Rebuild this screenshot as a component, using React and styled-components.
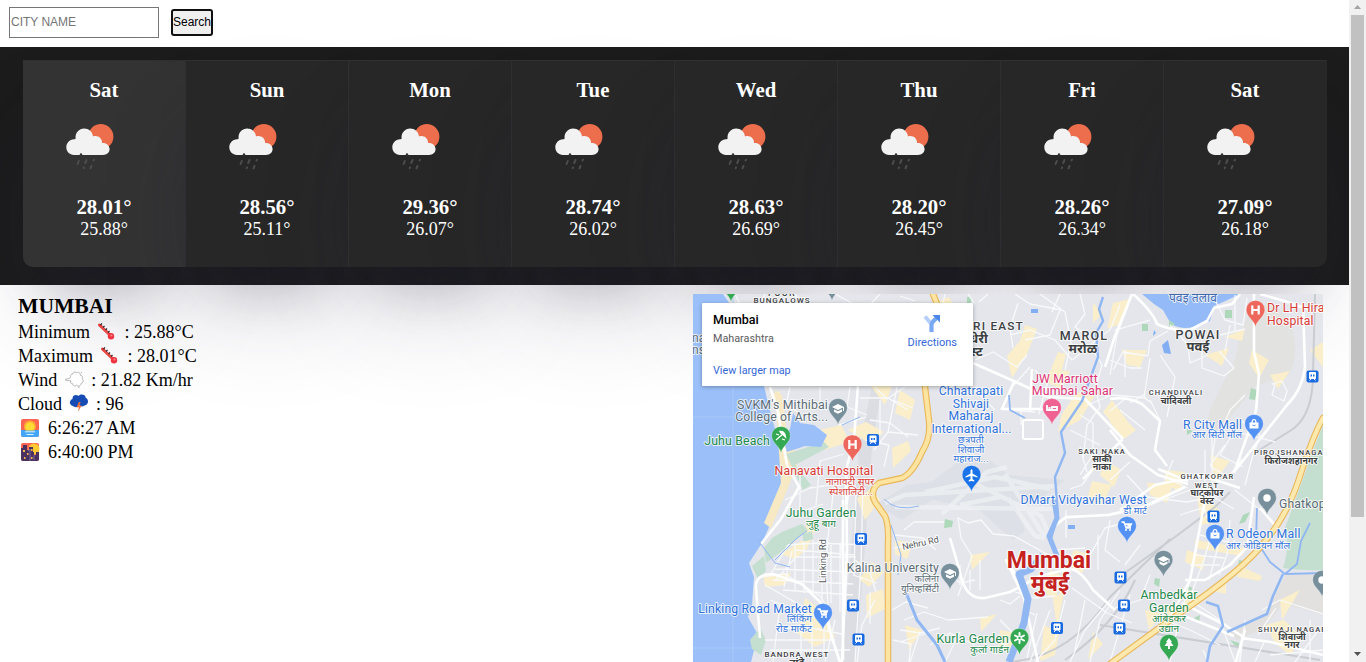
import React from "react";
import styled, { createGlobalStyle } from "styled-components";

const Global = createGlobalStyle`
  * { box-sizing: border-box; }
  html, body { margin: 0; padding: 0; background: #fff; overflow: hidden; }
  body { font-family: "Liberation Serif", "Times New Roman", serif; color: #000; }
`;

const Page = styled.div`display: flex; height: 662px; width: 1366px;`;
const Content = styled.main`width: 1349px; height: 662px; overflow: hidden;`;

const SearchBar = styled.header`
  height: 47px; display: flex; align-items: flex-start; gap: 12px; padding: 7px 9px 0;
`;
const CityInput = styled.input`
  width: 150px; height: 31px; border: 1px solid #767676; border-radius: 0; padding: 0 1px 2px;
  background: transparent; outline: none; font: 12px "Liberation Sans", Arial, sans-serif;
  &::placeholder { color: #757575; opacity: 1; }
`;
const SearchButton = styled.button`
  width: 42px; height: 27px; margin-top: 2px; padding: 0 0 2px; border: 2px solid #101010; border-radius: 3px;
  background: #efefef; color: #000; font: 12px "Liberation Sans", Arial, sans-serif; white-space: nowrap;
  display: flex; align-items: center; justify-content: center;
`;

const ForecastBand = styled.section`height: 238px; padding: 13px 22px 18px 23px; background: #1c1c1c;`;
const ForecastRow = styled.div`display: flex; height: 207px;`;
const DayCard = styled.article`
  width: 163px; display: flex; flex-direction: column; align-items: center; padding: 17px 0 0;
  background: ${(p) => (p.$today ? "#333" : "#272727")};
  border-top: 1px solid #303032; border-right: 1px solid ${(p) => (p.$last ? "#272727" : "#303032")};
  border-bottom-left-radius: ${(p) => (p.$today ? "10px" : 0)};
  border-bottom-right-radius: ${(p) => (p.$last ? "10px" : 0)};
  box-shadow: rgba(50, 50, 93, 0.25) 0 58px 100px -20px, rgba(0, 0, 0, 0.3) 0 34px 60px -30px;
  color: #fff; font-size: 20.8px; line-height: 24px; font-weight: bold;
`;
const RainIcon = styled.svg`width: 50px; height: 50px; margin: 21px 28px 24px 0;`;
const High = styled.div`height: 22px; line-height: 24px; margin-top: -2px;`;
const Low = styled.div`font-size: 18px; line-height: 24px; font-weight: normal;`;

const Lower = styled.section`display: flex; justify-content: space-between; padding: 9px 26px 0 18px;`;
const Details = styled.div`font-size: 18px; color: #000;`;
const City = styled.h1`margin: 0; font-size: 21.6px; height: 26px; line-height: 24px; font-weight: bold;`;
const Line = styled.div`display: flex; align-items: center; height: 24px; white-space: pre;`;
const Glyph = styled.svg`width: 20px; height: 20px; flex: none; margin: 0 ${(p) => p.$right}px 0 ${(p) => p.$left}px;`;

const MapFrame = styled.div`position: relative; width: 630px; height: 368px; overflow: hidden; background: #e4e6eb;`;
const MapSvg = styled.svg`display: block; width: 630px; height: 368px; font-family: Roboto, "Noto Sans", sans-serif;`;
const PlaceCard = styled.div`
  position: absolute; left: 9px; top: 9px; width: 271px; height: 83px; background: #fff;
  box-shadow: 0 1px 4px rgba(0,0,0,.3); border-radius: 1px; padding: 8px 16px 0 11px;
  display: flex; justify-content: space-between; font-family: Roboto, sans-serif;
`;
const PlaceName = styled.div`font-weight: 500; line-height: 17px; font-size: 12.5px;`;
const PlaceRegion = styled.div`font-size: 10.8px; line-height: 18px; color: #5b5b5b; margin-top: 2px;`;
const BigMapLink = styled.div`font-size: 10.8px; line-height: 14px; color: #3367d6; margin-top: 16px;`;
const Directions = styled.div`
  display: flex; flex-direction: column; align-items: center; padding-top: 2px; gap: 3px;
  color: #3367d6; font-size: 11px; line-height: 14px;
`;

const Scrollbar = styled.aside`
  width: 17px; height: 662px; background: #f1f1f1; display: flex; flex-direction: column; align-items: center;
  justify-content: space-between; 
`;
const Thumb = styled.div`width: 13px; height: 502px; background: #c1c1c1; margin-bottom: auto;`;
const Arrow = styled.svg`width: 17px; height: ${(p) => p.$h}px; flex: none;`;

const DAYS = [
  ["Sat", "28.01°", "25.88°"], ["Sun", "28.56°", "25.11°"], ["Mon", "29.36°", "26.07°"], ["Tue", "28.74°", "26.02°"],
  ["Wed", "28.63°", "26.69°"], ["Thu", "28.20°", "26.45°"], ["Fri", "28.26°", "26.34°"], ["Sat", "27.09°", "26.18°"],
];

function Rain() {
  return (
    <RainIcon viewBox="0 0 50 50">
      <circle cx="35.8" cy="13.7" r="12.6" fill="#ec6e4c" />
      <path d="M9 32C4.500 32 1.300 28.500 1.300 24.300S4.500 16.400 9 16.200C10 16.100 10.600 15.900 10.600 15.200C10 10 14 5.500 19.200 5.500C23.800 5.500 27.500 8.700 28 13.400C32.500 11.800 37.300 15 37.100 19.900C41.500 19.600 44.600 22.400 44.600 26.100S41.700 32 38 32Z" fill="#f2f2f2" />
      <circle cx="16" cy="31.500" r="1.200" fill="#333" />
      <g stroke="#4d4d4d" strokeWidth="2" strokeLinecap="round">
        <path d="M13.800 38l-1.200 3M21.500 37l-1.300 3M29 36.700l-.5.8M19 44.500l-.3.6M26.500 43l-1 2.300" />
      </g>
    </RainIcon>
  );
}

const Thermometer = () => (
  <Glyph viewBox="0 0 20 20" $left={7} $right={3}>
    <path d="M2.500 3L14 14" stroke="#e53935" strokeWidth="3" strokeLinecap="round" />
    <path d="M3.500 3l1.500-1.500M6 5.500L7.500 4M8.500 8L10 6.500M11 10.500L12.500 9" stroke="#262a33" strokeWidth="1.200" />
    <path d="M4 4.500l8 8" stroke="#f0716b" strokeWidth=".8" />
    <circle cx="14" cy="14.200" r="3.200" fill="#ef3340" /><circle cx="14.500" cy="13.500" r="1.100" fill="#ff8684" />
  </Glyph>
);
const Wind = () => (
  <Glyph viewBox="0 0 20 20" $left={7} $right={7}>
    <path d="M1 9.500C4 8.500 7 8.700 6.500 6.500C6.300 4.700 8 3.900 9 4C9 2 11.500 1.300 12.500 3C14 1.500 16.800 3 16.200 5.200C18.500 5.300 19 7.500 18 8.700C20 10 19.300 13 17.200 13.200C17.200 16 14 17 12.500 15.200C11 17 8.500 15.500 8.800 13.800C6.500 13.500 6 12.500 7 11C5 10.400 2.500 11 1 9.500ZM14 18l1.500-1M17 3l.8-1" fill="#fff" stroke="#aaa" strokeWidth=".9" />
  </Glyph>
);
const Storm = () => (
  <Glyph viewBox="0 0 20 20" $left={7} $right={7}>
    <path d="M4 12C-.5 11 .3 6 3.500 5C3 1 7.500 0 9.500 2C12-.8 17 .8 16.500 3.500C20 5 20 11 15.500 11.500C13 13.500 11 12 10.500 11C8 14 5.500 13.500 4 12Z" fill="#174bb4" />
    <path d="M9.800 8l-2.200 5.500 2.400-.2-1.200 4.700 3.900-6.500-2.600.2 1.500-3.700Z" fill="#f26d36" />
  </Glyph>
);
const Sunrise = () => (
  <Glyph viewBox="0 0 20 20" $left={2} $right={8}>
    <rect x="1" y="1" width="18" height="18" rx="2" fill="#ff6550" />
    <path d="M1 12h18v5q0 2-2 2H3q-2 0-2-2Z" fill="#42a5f5" />
    <circle cx="10" cy="8.500" r="6" fill="#ffae32" /><circle cx="10" cy="9" r="4.500" fill="#ffdc35" />
    <path d="M1 12.500h18v3H1Z" fill="#42a5f5" /><path d="M5 13.800h10M6.500 16.500h7" stroke="#dff3fc" />
  </Glyph>
);
const Sunset = () => (
  <Glyph viewBox="0 0 20 20" $left={2} $right={8}>
    <rect x="1" y="1" width="18" height="18" rx="2" fill="#ff6550" /><circle cx="14" cy="7" r="5.500" fill="#ffca32" />
    <path d="M1 6h2V3h4v5h2V5h4v5h1v3h2v-3h3v7q0 2-2 2H3q-2 0-2-2Z" fill="#4a315f" />
    <path d="M3 8h2v2H3zM11 7h1.500v2H11zM7 11h1.500v2H7zM4 15h1.500v2H4zM11 15h1.500v2H11z" fill="#f7b84b" />
    <path d="M8 9l2-2v12M14 18v-5" stroke="#7d68a2" fill="none" />
  </Glyph>
);

const MINOR = [
  "M735 294l10 20M765 294l-8 20M795 294l12 16M835 294l30 16M880 294l-15 16M900 296l15 5",
  "M790 387l-4 18 14 8M820 387v22M850 387l-3 20 20 8M905 387l-18 12-12-12M880 400v35M897 387l-9 45-14 18M870 420l20 3 18 14M893 400l20 8M860 398h28l20 12M838 425l28-8M844 454l-24 7M865 440l24 5-5 22M888 432l30 3",
  "M785 500l25-12 20-3M795 514l28-10M800 475v38M820 460l-4 45M833 495l-5 42-2 35 3 50 10 40M843 490v42l-3 27v53M850 485l-5 35M856 490l-2 85M863 485l-2 80-6 97",
  "M770 575l18-30 28-2 50 2M776 580l20-23h60M784 587l8-36M795 591v-48M804 593v-52M813 596v-56M822 601v-55M831 603v-58M840 608v-65M774 569l80 3M773 580l80 4M783 590l70 5M795 550l60 5M760 577l25-3 35 22 8 12",
  "M765 585l35 20 20 15M770 600l45 18M778 630l24-4 40 8M765 640h70M770 650h80M801 625v37M812 622v40M824 612v40M780 605l-7 57M835 620l-10 42",
  "M855 560l15 12 6 20M853 575l24 8M870 592v32M875 600l-13 25-5 37M895 535l28 3 13 12M894 548l16-3M892 610l14-8 22 6M893 640l18 4-2 18",
  "M904 530l10-8h30M904 620l20-8 24 8 40-3M900 630l20 3 20-5M900 642l30-10M910 662l10-30M930 645l20-12 25 12M945 662l15-30M950 575l10 8 15-3M960 565v20M970 570v20M980 560v30M958 596l14-40-11-18-3-20 10 5 13-3 12 14 21 2 45 25",
  "M945 294l-3 14-8 3M968 294l6 9M988 294l-9 8M1015 294l15 10 32 6M1040 294l25 18 6 30-6 28M1010 335l20-5 25 10M1018 303l-8 25 3 20M1060 310l-10 25-25 5M1055 340l17 20 13-10M975 360l18-8 24 15 10-12M1014 385l16-18M1035 370l12 14-8 30M1000 409l35 3M1021 425v-15M975 390l20 20",
  "M1060 294l-8 18M1080 294l5 20-10 13 15 10M1120 305l-10 25-20 15 12 20-5 18M1128 306l-11 29-7 40M1115 330l35-10M1110 360l20 8 12 0",
  "M1087 405l25-10 35 3M1080 415l13 8v25M1095 387l5 20-13 18-4 35M1113 370l10-18 25 4M1125 350v27M1130 403l15-9M1150 400l10 20M1110 411l15-12M1070 430l30 15M1080 447l7 25M1095 451l-15 24M1100 460l-18 25-12 4M1110 480l20-18M1120 410l25 20",
  "M1148 356l2-15 18-10M1150 358l-6 40 8 5M1160 355l15 22-8 40M1170 325l18 20 2 18 18-8M1190 350h12v18l22 8 10-8-15-17M1215 300l10 20 18 5 4-27M1230 325l-5 26M1235 295v36M1220 335l25-6",
  "M1235 430l-15 25 23 12M1240 420l20 15-5 15M1205 450v50M1212 425v60M1216 432l-5 35 18 10M1255 447l-10 38M1230 475l12-16M1225 445l-15 20M1203 485l14 14 17 10M1170 480l18 8M1173 460l-8 20",
  "M1065 518l40-3M1066 510v28M1055 550l30-2M1082 570l23-42 20-5M1098 535v35M1110 520l-5 30 15 12M1127 475l20 22 40 5 25-5M1105 515l45-10 40-15M1180 515l25-8M1200 490l7 28M1200 535l32 8M1195 555l30 3M1190 565h30M1214 525l-10 35-15 40M1222 532l-13 48",
  "M1190 580l-10 40M1230 520l-3 35-8 20M1235 540l-8 10M1235 490l25 20M1190 600l30 20 15 42M1165 620l25 10 30 15M1178 625l-8 37M1203 650l5 12M1245 620l-5 42M1245 628l-6 34",
  "M1015 592l20 6 20-2M1000 600l10 4 10-8M1025 610l10 5M1000 620l15 15M1000 650l15-15M1037 613l-10 45M1065 600l-10 40-20 22M1072 588l35 25 25 10M1050 610l-20 52M1110 600l-25 30-15 32M1085 600l-10 50M1120 590l-20 30-10 42M1130 595l-20 67M1150 575l-10 25-25 8M1140 545l-15 20",
  "M1245 395l-15 15-10 24M1230 430l45 12M1275 385l-3 10 12 6 3-10-5-10-10 3zM1262 610l18-10 43 14M1258 635l18-27M1265 640l-10 22M1270 655l53-5M1310 620v42M1320 628l-25 34",
];
const MAJOR = [
  "M770 387l8 25 4 25 5 28 12 22-18 32-20 25M973 363l43 19 32 15 37 2 38 40M1123 439l-40 40M1014 382l-12 27M1032 369l-2 42M1002 409h43",
  "M756 588Q755 574 773 574L802 584 822 604 832 638 840 662M843 500v160M756 588l4 50M858 385l-4 55-8 30 1 80-5 112",
  "M1132 294l-17 42-10 31M1133 294Q1153 312 1157 324Q1172 331 1190 330L1207 321 1214 308 1232 304 1240 294M1260 294l31 9 13 5 19 4M1303 303l2 65Q1302 390 1287 405L1234 472M1254 294v58L1259 374 1256 411 1234 473M1110 399Q1127 396 1142 404L1160 421 1155 450 1167 466M1110 430l20 25 28 20 30 9",
  "M950 538L960 572Q965 600 985 598L1010 592 1040 576 1065 570Q1078 565 1093 590L1115 610M1016 575l-10-15 18 38 14 64M1056 525l10-8 43-2 34-8 42-20M1120 510l35-25 45-10 40 13M1260 508l20 23M1205 500l-15 80-24 45M1185 580l20 0 25-15 17-18 7-50",
  "M1182 603L1225 625 1245 638M1245 630l-10 35M1241 638l30 4 52 13M1234 636l-50-20M1188 481l-30-12",
];
const YELLOW = "M770 395l10-4v17zM820 430l21-5 9 17-26 8zM848 430l18-8 18 10-13 12zM857 498l15-10 8 12-15 20zM807 520l10 4-10 25-12 10-14-5 22-14zM763 575l28-2-6 12-20 2zM805 598l20 15 10 24-20 10-18-14zM872 562l12 10-15 15-10-8zM866 595l17-6 2 20-18 9zM895 540l18 3-6 16-12-5zM900 390l15 10-5 20-15-7zM892 448l16-7 3 10-18 17zM870 385l23-2-8 22zM937 302l12-5 9 16-15-5zM1025 325l12 4-10 25-15 24-5-22 13-15zM1058 352l8 2-5 20-10-5zM1050 370l20 1-9 18-15-7zM1077 392l18 3-15 25-22 12 4-18zM1093 303l10 10-10 10zM1113 303l17-4-10 25-13 5zM1122 350l25 0-7 17-13-2zM1112 400l15 20-8 12-16-20zM1124 418l12 12-12 9-15-18zM1105 460l16 10-7 17-14-12zM1147 483l26 0-6 20-17-8zM1092 481l20 4-10 20-15-5zM1197 495l20 12 4 14-20 4zM1187 550l18 6-2 14-18-8zM1182 588l18 5-15 15zM1195 540l50 8-3 8-47-8zM1252 350l17 10-10 18-10-15zM1225 337l20-8-3 12zM1205 355l24-7-7 18zM1270 375l20-4-12 18zM1310 350l13-8v25zM1280 600l20-10-18 30zM1266 625l18-5 18 18-12 17-15-12zM1208 590l18-8 0 12zM1167 605l15 4-15 20zM1145 610l19 4-15 16zM1240 566l22 10-2 5-23-4zM1050 570l10 5-4 25-14-8zM1053 600l12-12-8 40zM1074 550l18 5-10 18-15-8zM1044 625l15 8-4 22-15 6zM970 555l20-3-18 18zM980 618l17-4-16 18zM905 625l17 5-13 20zM1000 630l20 4-7 20-15-6zM1093 632l10 12-15 15zM1165 470l20 2-5 20-15-8zM1210 455l20 6-15 20z";

const LABELS = [
  ["FOUR", 782, 295.500, 9, "dark", "middle", 1.3], ["BUNGALOWS", 782, 303, 8, "dark", "middle", 1],
  ["SVKM's Mithibai", 828, 408.500, 12.300, "grey", "end"], ["College of Arts...", 828, 421, 12.200, "grey", "end"],
  ["Juhu Beach", 770, 444.500, 12.300, "green", "end"], ["Nanavati Hospital", 824, 475, 12.200, "red", "middle"],
  ["नानावटी सुपर", 850, 485, 9.800, "red", "middle"], ["स्पेशालिटी...", 851, 495, 9.800, "red", "middle"],
  ["Juhu Garden", 821, 516.500, 12.200, "green", "middle"], ["जुहू बाग", 821, 527, 10, "green", "middle"],
  ["Kalina University", 939, 572, 12.200, "grey", "end"], ["कलिना", 939, 581.500, 9.500, "grey", "end"], ["युनिव्हर्सिटी", 939, 591.500, 9.500, "grey", "end"],
  ["Linking Road Market", 812, 612.500, 12.200, "blue", "end"], ["लिंकिंग", 812, 622, 9.800, "blue", "end"], ["रोड मार्केट", 812, 632, 9.800, "blue", "end"],
  ["BANDRA WEST", 797, 656.500, 8, "dark", "middle", 0.9], ["वांद्रे", 797, 666, 10, "dark", "middle"],
  ["ANDHERI EAST", 1024, 330, 11.800, "dark", "end", 1.2], ["अंधेरी", 988, 342.500, 13, "dark", "end"], ["ईस्ट", 983, 356, 13, "dark", "end"],
  ["MAROL", 1084, 340, 12.500, "dark", "middle", 1.2], ["मरोळ", 1083, 353, 13, "dark", "middle"],
  ["POWAI", 1198, 338.500, 12.500, "dark", "middle", 1.2], ["पवई", 1198, 351, 13, "dark", "middle"],
  ["पवई तलाव", 1193, 302, 12, "lake", "middle"],
  ["Dr LH Hiranandani", 1267, 312, 12.300, "red", "start"], ["Hospital", 1267, 325, 12.200, "red", "start"],
  ["JW Marriott", 1065, 382.500, 12.200, "pink", "middle"], ["Mumbai Sahar", 1072.500, 395, 12.300, "pink", "middle"],
  ["CHANDIVALI", 1176, 395, 7.500, "dark", "middle", 1.1], ["चांदिवली", 1176, 403.500, 8.800, "dark", "middle"],
  ["Chhatrapati", 971, 395, 12.200, "blue", "middle"], ["Shivaji", 971, 407.500, 12.200, "blue", "middle"], ["Maharaj", 971, 420, 12.200, "blue", "middle"], ["International...", 971.500, 432.500, 12.200, "blue", "middle"],
  ["छत्रपती", 971, 443, 9.500, "blue", "middle"], ["शिवाजी", 971, 452.500, 9.500, "blue", "middle"], ["महाराज...", 971, 462, 9.500, "blue", "middle"],
  ["R City Mall", 1242, 428.500, 12.200, "blue", "end"], ["आर सिटी मॉल", 1242, 438, 9.500, "blue", "end"],
  ["SAKI NAKA", 1102, 453.500, 7.500, "dark", "middle", 1], ["साकी", 1102, 462, 9, "dark", "middle"], ["नाका", 1102, 470, 9, "dark", "middle"],
  ["PIROJSHANAGAR", 1254, 455, 7.500, "dark", "start", 1.1], ["फिरोजशहानगर", 1291, 463.500, 8.700, "dark", "middle"],
  ["GHATKOPAR", 1207.500, 479, 7.500, "dark", "middle", 1.2], ["WEST", 1207, 487.500, 7.500, "dark", "middle", 1.1], ["घाटकोपर", 1207, 496, 8.800, "dark", "middle"], ["वेस्ट", 1207, 504, 8.800, "dark", "middle"],
  ["Ghatkopar", 1279, 507.500, 12.200, "grey", "start"], ["DMart Vidyavihar West", 1147, 503.500, 12.200, "blue", "end"], ["डी मार्ट", 1147, 513.500, 9.500, "blue", "end"],
  ["R Odeon Mall", 1226, 538, 12.300, "blue", "start"], ["आर ओडियन मॉल", 1226, 548.500, 9.800, "blue", "start"],
  ["Ambedkar", 1169, 599, 12.200, "green", "middle"], ["Garden", 1169, 611.500, 12.200, "green", "middle"], ["आंबेडकर", 1169, 621.500, 10, "green", "middle"], ["उद्यान", 1169, 631.500, 10, "green", "middle"],
  ["Kurla Garden", 1009, 642.500, 12.300, "green", "end"], ["कुर्ला गार्डन", 1009, 652.500, 9.800, "green", "end"],
  ["SHIVAJI NAGAR", 1258, 631.500, 7.500, "dark", "start", 1.1], ["शिवाजी", 1292, 640, 9, "dark", "middle"], ["नगर", 1292, 648, 9, "dark", "middle"],
  ["na", 692, 342, 12, "grey", "start"], ["ns", 692, 354, 12, "grey", "start"],
];
const INK = { dark: "#3c4043", grey: "#5b6b75", green: "#22884b", red: "#d83b35", blue: "#2f72db", pink: "#dc3275", lake: "#4268ad" };
const PINS = [
  [838, 408, "#78909c", "cap"], [781, 436, "#34a853", "beach"], [852.500, 444.500, "#ee675c", "H"], [1255.500, 310, "#ee675c", "H"],
  [1052, 408, "#f06292", "bed"], [1254, 424, "#5491f5", "bag"], [971.500, 475, "#1a73e8", "plane"], [1267, 498, "#78909c", "dot"],
  [1127, 526, "#5491f5", "cart"], [1215, 534, "#5491f5", "bag"], [950, 573, "#78909c", "cap"], [823, 613, "#5491f5", "cart"],
  [1163.500, 560, "#78909c", "cap"], [1019.500, 638, "#34a853", "flower"], [1169, 644, "#34a853", "tree"], [1322, 580, "#78909c", "dot"],
  [731, 285, "#34a853", ""], [832, 284, "#78909c", ""],
];
const MARK = {
  H: <path d="M-3.200-4.500v9M3.200-4.500v9M-3 0h6" stroke="#fff" strokeWidth="2.200" />,
  cap: <g fill="#fff"><path d="M-6-1l6-3 6 3-6 3z" /><path d="M-4 1.200l4 2 4-2v2.500l-4 2-4-2zM5-1h1v4H5z" /></g>,
  beach: <g fill="none" stroke="#fff" strokeWidth="1.300"><path d="M-5 4L3-3" /><path d="M-1-4.500Q4-5 4.500 1L2.500-1 0-3z" fill="#fff" /><path d="M-5-2l3 1M1 3l3 1" /></g>,
  bed: <path d="M-5-3v6M-5 2h10M5 3v-4h-5v3M-3.500 0h2" stroke="#fff" strokeWidth="1.800" fill="none" />,
  bag: <><path d="M-4.500-1.500h9v6h-9z" fill="#fff" /><path d="M-2-1q0-3.500 2-3.500t2 3.500" stroke="#fff" strokeWidth="1.200" fill="none" /><path d="M-1.500 1q1.500 1.800 3 0" stroke="#5491f5" fill="none" /></>,
  cart: <><path d="M-5.500-4h2.500l2 6h5M-2.500-2h7l-1.500 3h-4.500" stroke="#fff" strokeWidth="1.300" fill="#fff" /><circle cx="-1" cy="4" r="1" fill="#fff" /><circle cx="3" cy="4" r="1" fill="#fff" /></>,
  plane: <path d="M0-6l1 1.200v3.200l5 3v1.200l-5-1.500v3l1.800 1.500v1L0 6l-2.800.6v-1L-1 4.100v-3l-5 1.500V1.400l5-3v-3.200z" fill="#fff" />,
  dot: <circle r="3.700" fill="#fff" />,
  flower: <><path d="M0-5V5M-4.500-2.500l9 5M-4.500 2.500l9-5" stroke="#fff" strokeWidth="2" strokeLinecap="round" /><circle r="1.200" fill="#34a853" /></>,
  tree: <path d="M0-6l3 4H1.800L4.500 2H1v3h-2V2h-3.500l2.700-4H-3z" fill="#fff" />,
};
const STATIONS = [[873, 440], [861, 539], [853, 605.500], [858.500, 639.500], [1312.500, 376.500], [1213.500, 516.500], [1120.500, 577.500], [1124, 605.500], [1119.500, 628.500], [1057, 628]];
const WESTERN_EXPRESS = "M933 294l4 10-12 83 4 34q2 17-7 31-9 21-20 26l-23 5q-10 8-4 19l10 14q4 9 3 28v120";
const EASTERN_EXPRESS = "M1323 418q-10 18-23 58-12 38-34 64-21 29-89 75l-70 51";

function CityMap() {
  return (
    <MapSvg viewBox="693 294 630 368">
      <path d="M693 294h30l14 20 10 40 17 32 4 17 8 30 5 26 1 20-5 20-7 26-8 18-13 20 5 14-2 28-4 12 10 18-7 27h-62z" fill="#9bc0f9" />
      <path d="M733 294v368M693 417h82M693 648h60" stroke="#a9c9fa" />
      <path d="M1235 360q5-30 15-48 20-18 40 10 12 34-3 55l-30 8q-20 25-42 48-15 4-2-30z" fill="#e1dfda" opacity=".6" />
      <path d="M1230 632l38-17 8-22 10-18 37-2v42l-40-12-18 25-28 12z" fill="#e2ded9" opacity=".65" />
      <path d="M1323 424v146q-20 1-40-2 7-20 2-40l11-30z" fill="#c4dfd0" />
      <g fill="#d5d9df">
        <path d="M876 505l31-20 24-3 38-28 22 7 17 14 57 5-20 16-30 7 10 28-12 9-35-31-46-9-30 20z" opacity=".45" />
        <path d="M872 387h10l-10 60-7 100-9 115h-15l13-145 5-70z" opacity=".65" />
      </g>
      <g stroke="#eef0f2" strokeWidth="4.500" opacity=".8" fill="none">
        <path d="M885 503l20-8 150-9M895 507l160 2M942 514l45-42 20-5M976 484l65 32 6 14-4 8-8-2-27-38M1005 474l38 60M925 492l70-15 55 12M960 505l40-8" />
      </g>
      <path d={YELLOW} fill="#faefca" />
      <path d="M775 390l7 5 5 40 12 25-12 30-16 38-7-5 17-40-2-30z" fill="#f6e9c4" />
      <path d="M786 454l38-12 5 5-34 18 16 20-8 5zM782 532l20-8 6 6-22 18-20 15-2-15 8-10zM752 566l12-10 2 15-8 8zM803 534l9-3 1 8-10 3zM750 640l10-12 6 12-5 15-9-6z" fill="#c4dfcf" />
      <path d="M793 413l7 10 14 2 13 10-6 12-16-1-18 6-4-13 7-10z" fill="#9bc0f9" />
      <path d="M1142 294l12 10 9 6 8 14q11 6 22 3l17-6 4-15q12-5 26-12z" fill="#94bbf7" />
      <g fill="#add8b9"><path d="M1142 324h6v7h-6zM1225 310h7v8h-7zM1251 388l6 2-2 10-6-1zM1243 515l7-3-5 10-6 2zM1239 560l8 2-9 7zM1155 578l5 1-1 8-5-3zM1230 640l9 3v7zM945 519l8 2-1 6-8 1zM967 297h4v8h-4zM1169 320l6 4-6 4zM1187 429l6 2-6 4zM1187 585l7 4-7 2zM1194 618l6-3-1 8z" /></g>
      <path d="M1162 345l6-5 3 14-7-1zM1154 330l2 3-3 3zM1031 309h7v4h-7zM1068 525h7v4h-7z" fill="#82aef4" />
      <g fill="none" stroke="#c9cdd2" strokeWidth="2"><path d="M1315 294l-2 80q0 40-20 55l-40 25M1115 580l60-43 40-30 15-15M1065 660q50-35 70-80M1010 662q60-5 100-65l60-58M1100 625l220 35" /></g>
      <path d={MINOR.join(" ")} fill="none" stroke="#f8f9fa" strokeWidth="1.300" strokeLinejoin="round" />
      <path d={MAJOR.join(" ")} fill="none" stroke="#fff" strokeWidth="2.600" strokeLinejoin="round" />
      <g fill="none" stroke="#91b7f3" strokeLinejoin="round">
        <path d="M1103 297l-4 12 4 12-7 12 2 24-16 44-21 31 4 21-10 24 3 38-8 27 8 17" strokeWidth="2.400" />
        <path d="M1054 500l3 18-8 18 8 20" strokeWidth="5" />
        <path d="M1043 555l-12 14-12 5 9 25-4 24-15 39" strokeWidth="7" />
        <path d="M905 590l12 30 20 25 8 17" strokeWidth="3" />
        <path d="M1009 395l1 15 15 8M1257 508l-1 32 14 22 15 12 38-1M1310 523l-9 18-4 23-12 10" strokeWidth="1.800" />
        <path d="M1283 574l-10 22-6 18-40 18M1206 602l12 4 5 20-13 20-3 16" strokeWidth="2.600" />
        <path d="M757 539l18 24 15 4M775 560l22-22 10-7M884 499q12 13 35 7M891 525l10 30-3 20M842 425l18-8" strokeWidth="1" />
      </g>
      <g fill="none" strokeLinejoin="round" strokeLinecap="round">
        <path d={WESTERN_EXPRESS} stroke="#e9b75a" strokeWidth="6.500" />
        <path d={WESTERN_EXPRESS} stroke="#fde4a0" strokeWidth="4.300" />
        <path d={EASTERN_EXPRESS} stroke="#e9b75a" strokeWidth="6.500" />
        <path d={EASTERN_EXPRESS} stroke="#fde8ad" strokeWidth="4.300" />
      </g>
      <rect x="1023" y="420" width="20" height="19" rx="2" fill="none" stroke="#fff" strokeWidth="2" />
      {STATIONS.map(([x, y]) => (
        <g key={x + "-" + y} transform={`translate(${x} ${y})`}>
          <rect x="-6" y="-6" width="12" height="12" rx="2" fill="#1a6ae0" />
          <path d="M-3-4h6v6h-6zM-3 4l2-2M3 4l-2-2" fill="#fff" stroke="#fff" />
          <path d="M-2-2h1.500v2H-2zM.5-2H2v2H.5z" fill="#1a6ae0" />
        </g>
      ))}
      {PINS.map(([x, y, color, mark]) => (
        <g key={x} transform={`translate(${x} ${y})`}>
          <path d="M0 17C-1 10-9.300 7-9.300-.3a9.300 9.300 0 1 1 18.600 0C9.300 7 1 10 0 17z" fill={color} stroke="#fff" strokeOpacity=".45" strokeWidth=".6" />
          {MARK[mark]}
        </g>
      ))}
      {LABELS.map(([text, x, y, size, tone, anchor, spacing]) => (
        <text key={text + x + y} x={x} y={y} fontSize={size} fill={INK[tone]} textAnchor={anchor} letterSpacing={spacing || 0.15}
          fontWeight={tone === "dark" ? (/[A-Z]/.test(text) ? 500 : 700) : 400} stroke="#fff" strokeOpacity=".8" strokeWidth="1.8" strokeLinejoin="round" paintOrder="stroke">{text}</text>
      ))}
      <g fontSize="9.500" fill="#55595d" stroke="#fff" strokeWidth="2" paintOrder="stroke">
        <text transform="translate(826 583) rotate(-90)">Linking Rd</text>
        <text transform="translate(903 550) rotate(-12)" fontSize="9">Nehru Rd</text>
      </g>
      <g fontWeight="700" fill="#c5221f" stroke="#fff" strokeWidth="2.500" strokeOpacity=".8" strokeLinejoin="round" paintOrder="stroke" textAnchor="middle">
        <text x="1049" y="567.500" fontSize="23">Mumbai</text><text x="1050" y="590.500" fontSize="21.500">मुंबई</text>
      </g>
    </MapSvg>
  );
}

export default function App() {
  return (
    <Page>
      <Global />
      <Content>
        <SearchBar><CityInput placeholder="CITY NAME" /><SearchButton>Search</SearchButton></SearchBar>
        <ForecastBand>
          <ForecastRow>
            {DAYS.map(([day, high, low], i) => (
              <DayCard key={i} $today={i === 0} $last={i === 7}><div>{day}</div><Rain /><High>{high}</High><Low>{low}</Low></DayCard>
            ))}
          </ForecastRow>
        </ForecastBand>
        <Lower>
          <Details>
            <City>MUMBAI</City>
            <Line>Minimum<Thermometer /> : 25.88°C</Line>
            <Line>Maximum<Thermometer /> : 28.01°C</Line>
            <Line>Wind<Wind />: 21.82 Km/hr</Line>
            <Line>Cloud<Storm />: 96</Line>
            <Line><Sunrise />6:26:27 AM</Line>
            <Line><Sunset />6:40:00 PM</Line>
          </Details>
          <MapFrame>
            <CityMap />
            <PlaceCard>
              <div><PlaceName>Mumbai</PlaceName><PlaceRegion>Maharashtra</PlaceRegion><BigMapLink>View larger map</BigMapLink></div>
              <Directions>
                <svg width="20" height="20" viewBox="0 0 20 20">
                  <path d="M3 3.500l6 7" stroke="#b6cffa" strokeWidth="4" />
                  <path d="M9.500 19v-7q0-2 2-4l3-3" stroke="#7aa9f3" strokeWidth="4.200" fill="none" /><path d="M10.500 2H18v7.500z" fill="#4a87e8" />
                </svg>
                Directions
              </Directions>
            </PlaceCard>
          </MapFrame>
        </Lower>
      </Content>
      <Scrollbar>
        <Arrow $h={15} viewBox="0 0 17 15"><path d="M5 9l3.500-4L12 9z" fill="#a3a3a3" /></Arrow>
        <Thumb />
        <Arrow $h={17} viewBox="0 0 17 17"><path d="M5 7l3.500 4L12 7z" fill="#505050" /></Arrow>
      </Scrollbar>
    </Page>
  );
}
